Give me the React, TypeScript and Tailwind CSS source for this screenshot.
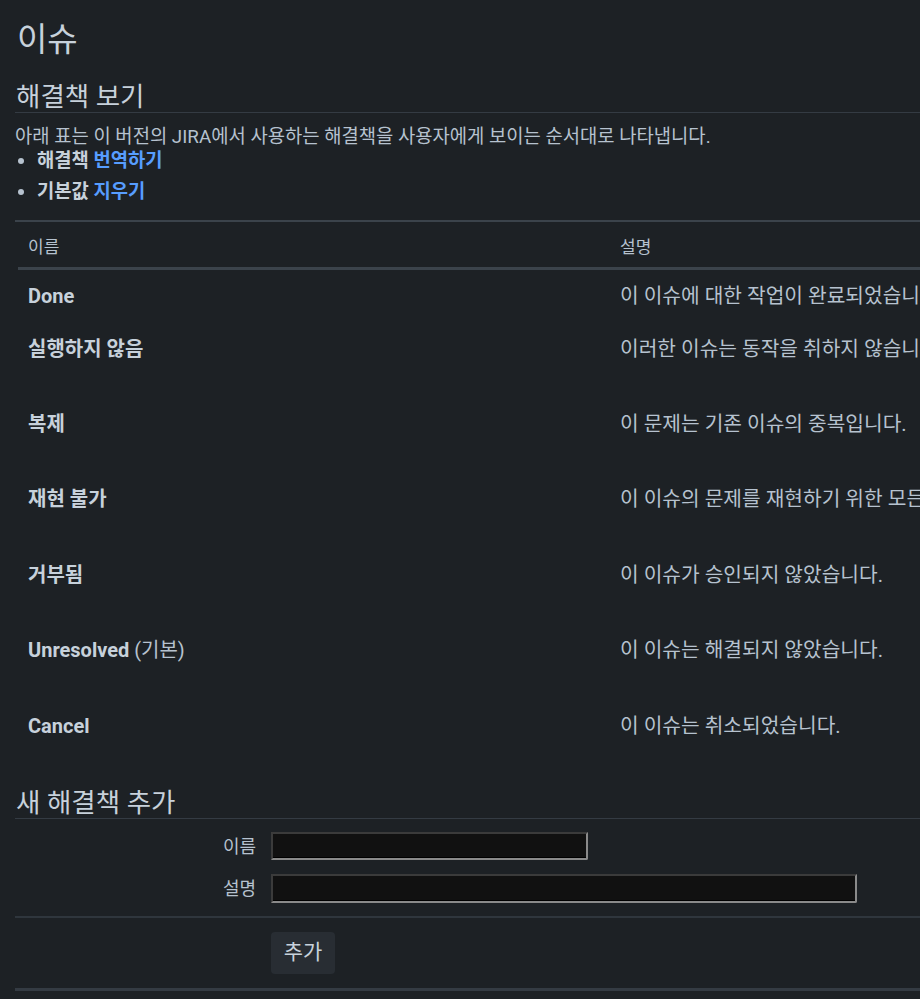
import React from "react";

const rows: { name: string; suffix?: string; desc: string; h: string }[] = [
  { name: "Done", desc: "이 이슈에 대한 작업이 완료되었습니다.", h: "h-[53px]" },
  { name: "실행하지 않음", desc: "이러한 이슈는 동작을 취하지 않습니다.", h: "h-[75px]" },
  { name: "복제", desc: "이 문제는 기존 이슈의 중복입니다.", h: "h-[75px]" },
  { name: "재현 불가", desc: "이 이슈의 문제를 재현하기 위한 모든 시도가 실패했습니다.", h: "h-[76px]" },
  { name: "거부됨", desc: "이 이슈가 승인되지 않았습니다.", h: "h-[75px]" },
  { name: "Unresolved", suffix: " (기본)", desc: "이 이슈는 해결되지 않았습니다.", h: "h-[76px]" },
  { name: "Cancel", desc: "이 이슈는 취소되었습니다.", h: "h-[75px]" },
];

export default function App() {
  return (
    <div
      className="w-[920px] h-[999px] overflow-hidden bg-[#1d2125] text-[#b6c2cf]"
      style={{ fontFamily: 'Roboto, "Noto Sans CJK KR", sans-serif' }}
    >
      <div className="pl-[15px] w-[1300px]">
        <h1 className="mt-[20px] h-[40px] leading-[40px] text-[33px] text-[#c7d1db] pl-[2px]">이슈</h1>

        <h2 className="mt-[22px] h-[31px] leading-[30px] text-[26.5px] text-[#c7d1db] border-b border-[#343b43] pl-[1px]">
          해결책 보기
        </h2>

        <p className="mt-[12px] h-[24px] leading-[24px] text-[18.8px] whitespace-nowrap">
          아래 표는 이 버전의 JIRA에서 사용하는 해결책을 사용자에게 보이는 순서대로 나타냅니다.
        </p>
        <ul className="flex flex-col gap-[7px] text-[18.8px] leading-[24px]">
          <li className="flex items-center pl-[3px]">
            <span className="w-[6px] h-[6px] rounded-full bg-[#b6c2cf] mr-[13px]" />
            <span className="font-bold text-[#c7d1db]">
              해결책 <span className="text-[#579dff]">번역하기</span>
            </span>
          </li>
          <li className="flex items-center pl-[3px]">
            <span className="w-[6px] h-[6px] rounded-full bg-[#b6c2cf] mr-[13px]" />
            <span className="font-bold text-[#c7d1db]">
              기본값 <span className="text-[#579dff]">지우기</span>
            </span>
          </li>
        </ul>

        <div className="mt-[16px] border-t-2 border-[#3b434b]">
          <div className="flex h-[48px] pt-[7px] items-center text-[17px] text-[#b6c2cf] border-b-[3px] border-[#3b434b] ml-[3px]">
            <div className="w-[602px] pl-[10px]">이름</div>
            <div>설명</div>
          </div>
          {rows.map((r) => (
            <div key={r.name} className={`flex ${r.h} pt-[13px] text-[20px] leading-[26px] whitespace-nowrap`}>
              <div className="w-[605px] pl-[13px]">
                <span className="font-bold text-[#c7d1db]">{r.name}</span>
                {r.suffix && <span>{r.suffix}</span>}
              </div>
              <div className="text-[20.3px]">{r.desc}</div>
            </div>
          ))}
        </div>

        <h2 className="mt-[13px] h-[31px] leading-[30px] text-[26.5px] text-[#c7d1db] border-b border-[#343b43] pl-[1px]">
          새 해결책 추가
        </h2>

        <div className="mt-[13px] flex flex-col gap-[14px] text-[18px]">
          <div className="flex items-center h-[28px]">
            <label className="w-[256px] text-right pr-[15px]">이름</label>
            <input
              type="text"
              className="w-[317px] h-[28px] bg-[#111111] border-2 border-t-[#3b3b3b] border-l-[#3b3b3b] border-b-[#8a8a8a] border-r-[#8a8a8a] rounded-br-[2px] shadow-[inset_0_-1px_0_#000] outline-none"
            />
          </div>
          <div className="flex items-center h-[29px]">
            <label className="w-[256px] text-right pr-[15px]">설명</label>
            <input
              type="text"
              className="w-[586px] h-[29px] bg-[#111111] border-2 border-t-[#3b3b3b] border-l-[#3b3b3b] border-b-[#8a8a8a] border-r-[#8a8a8a] rounded-br-[2px] shadow-[inset_0_-1px_0_#000] outline-none"
            />
          </div>
        </div>

        <div className="mt-[13px] border-t-2 border-[#2f363d]">
          <div className="pt-[14px] pl-[256px] pb-[14px]">
            <button className="w-[64px] h-[42px] rounded-[4px] bg-[#282d33] text-[21px] text-[#c7d1db]">
              추가
            </button>
          </div>
          <div className="border-t-[3px] border-[#343b43]" />
        </div>
      </div>
    </div>
  );
}
